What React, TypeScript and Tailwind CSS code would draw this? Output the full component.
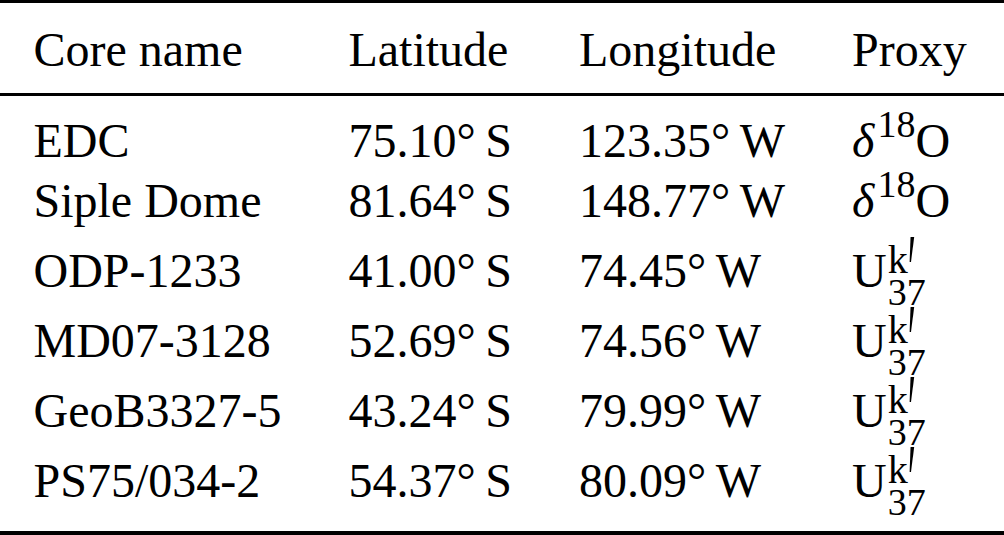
const rows = [
  { name: "EDC", lat: "75.10°\u2009S", lon: "123.35°\u2009W", proxy: "d18o" },
  { name: "Siple Dome", lat: "81.64°\u2009S", lon: "148.77°\u2009W", proxy: "d18o" },
  { name: "ODP-1233", lat: "41.00°\u2009S", lon: "74.45°\u2009W", proxy: "uk37" },
  { name: "MD07-3128", lat: "52.69°\u2009S", lon: "74.56°\u2009W", proxy: "uk37" },
  { name: "GeoB3327-5", lat: "43.24°\u2009S", lon: "79.99°\u2009W", proxy: "uk37" },
  { name: "PS75/034-2", lat: "54.37°\u2009S", lon: "80.09°\u2009W", proxy: "uk37" },
];

function Proxy({ kind }: { kind: string }) {
  if (kind === "d18o") {
    return (
      <span>
        <span className="italic">δ</span>
        <span className="text-[38px] leading-[0] align-[20px] ml-[3px]">18</span>
        O
      </span>
    );
  }
  // U^{k'}_{37}
  return (
    <span>
      U
      <span className="text-[38px] leading-[0] align-[-18px] ml-[1px]">37</span>
      <span className="text-[40px] leading-[0] align-[14px] ml-[-38px]">k</span>
      <span className="inline-block text-[38px] leading-[0] align-[3px] ml-[0px] scale-y-[2.8] origin-top">
        ′
      </span>
    </span>
  );
}

export default function App() {
  const cell = "px-[33.5px] whitespace-nowrap text-left align-top";
  return (
    <div
      className="w-[1004px] h-[535px] bg-white text-black overflow-hidden"
      style={{ fontFamily: '"Liberation Serif", "Times New Roman", serif' }}
    >
      <table className="w-[1004px] border-collapse text-[48px] leading-[60px]">
        <thead>
          <tr className="border-t-[3px] border-b-[3px] border-black">
            <th className={`${cell} font-normal pt-[17px] pb-[13px]`}>Core name</th>
            <th className={`${cell} font-normal pt-[17px] pb-[13px]`}>Latitude</th>
            <th className={`${cell} font-normal pt-[17px] pb-[13px]`}>Longitude</th>
            <th className={`${cell} font-normal pt-[17px] pb-[13px] w-full`}>Proxy</th>
          </tr>
        </thead>
        <tbody className="border-b-[4px] border-black">
          {rows.map((r, i) => {
            const pad =
              i === 0 ? "pt-[15px]" : i === 1 ? "" : i === 5 ? "pt-[10px] pb-[20px]" : "pt-[10px]";
            return (
              <tr key={r.name}>
                <td className={`${cell} ${pad}`}>{r.name}</td>
                <td className={`${cell} ${pad}`}>{r.lat}</td>
                <td className={`${cell} ${pad}`}>{r.lon}</td>
                <td className={`${cell} ${pad}`}>
                  <Proxy kind={r.proxy} />
                </td>
              </tr>
            );
          })}
        </tbody>
      </table>
    </div>
  );
}
